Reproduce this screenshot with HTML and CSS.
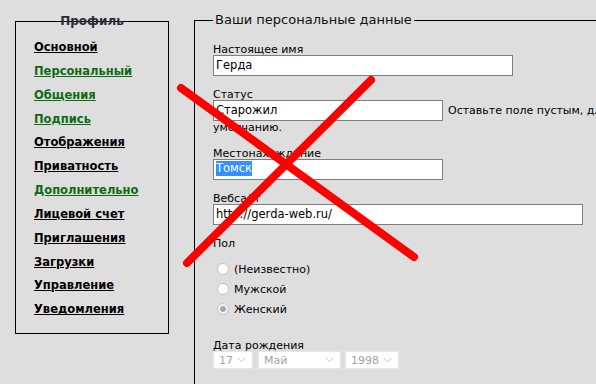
FILE: index.html
```html
<!DOCTYPE html>
<html lang="ru">
<head>
<meta charset="utf-8">
<title>Профиль</title>
<link rel="stylesheet" href="styles.css">
</head>
<body>
<div class="page">
  <nav class="side">
    <div class="side-title">Профиль</div>
    <ul class="menu">
      <li><a href="#">Основной</a></li>
      <li><a class="green" href="#">Персональный</a></li>
      <li><a class="green" href="#">Общения</a></li>
      <li><a class="green" href="#">Подпись</a></li>
      <li><a href="#">Отображения</a></li>
      <li><a href="#">Приватность</a></li>
      <li><a class="green" href="#">Дополнительно</a></li>
      <li><a href="#">Лицевой счет</a></li>
      <li><a href="#">Приглашения</a></li>
      <li><a href="#">Загрузки</a></li>
      <li><a href="#">Управление</a></li>
      <li><a href="#">Уведомления</a></li>
    </ul>
  </nav>

  <form class="main">
    <fieldset class="panel">
      <legend>Ваши персональные данные</legend>

      <div class="label">Настоящее имя</div>
      <div class="box w-name">Герда</div>

      <div class="label gap">Статус</div>
      <div class="status-row">
        <div class="box w-short">Старожил</div>
        <span class="hint">Оставьте поле пустым, для использования значения по</span>
      </div>
      <div class="hint-cont">умолчанию.</div>

      <div class="label gap">Местонахождение</div>
      <div class="box w-short"><span class="sel">Томск</span></div>

      <div class="label gap">Вебсайт</div>
      <div class="box w-web">http://gerda-web.ru/</div>

      <div class="label gap">Пол</div>
      <div class="radios">
        <div class="radio-row"><span class="radio"></span><span>(Неизвестно)</span></div>
        <div class="radio-row"><span class="radio"></span><span>Мужской</span></div>
        <div class="radio-row"><span class="radio checked"></span><span>Женский</span></div>
      </div>

      <div class="label gap-date">Дата рождения</div>
      <div class="selects">
        <div class="select s-day"><span>17</span><svg width="9" height="6" viewBox="0 0 9 6"><path d="M0.5 0.8 L4.5 4.8 L8.5 0.8" fill="none" stroke="#c4c4c4" stroke-width="1"/></svg></div>
        <div class="select s-month"><span>Май</span><svg width="9" height="6" viewBox="0 0 9 6"><path d="M0.5 0.8 L4.5 4.8 L8.5 0.8" fill="none" stroke="#c4c4c4" stroke-width="1"/></svg></div>
        <div class="select s-year"><span>1998</span><svg width="9" height="6" viewBox="0 0 9 6"><path d="M0.5 0.8 L4.5 4.8 L8.5 0.8" fill="none" stroke="#c4c4c4" stroke-width="1"/></svg></div>
      </div>
    </fieldset>
  </form>

  <svg class="cross" width="596" height="384" viewBox="0 0 596 384">
    <line x1="181" y1="88" x2="414" y2="257" stroke="#ff0000" stroke-width="8" stroke-linecap="round"/>
    <line x1="371" y1="80" x2="187" y2="263" stroke="#ff0000" stroke-width="8" stroke-linecap="round"/>
  </svg>
</div>
</body>
</html>
```

FILE: styles.css
```css
html, body {
  margin: 0;
  padding: 0;
  overflow: hidden;
}

body {
  background: #dedede;
  font-family: "DejaVu Sans", Verdana, sans-serif;
  color: #111;
  width: 596px;
  height: 384px;
}

.page {
  position: relative;
  display: flex;
  align-items: flex-start;
  width: 596px;
  height: 384px;
}

/* ---------- left menu ---------- */
.side {
  box-sizing: border-box;
  flex: none;
  width: 154px;
  height: 313px;
  margin: 21px 0 0 15px;
  border: 1px solid #000;
}

.side-title {
  margin-top: -8px;
  text-align: center;
  font-size: 12px;
  font-weight: bold;
  line-height: 14px;
  color: #2b2b33;
}

.menu {
  list-style: none;
  margin: 8px 0 0;
  padding: 0 0 0 18px;
}

.menu li {
  height: 23.85px;
  line-height: 23.85px;
  font-size: 11.5px;
  font-weight: bold;
  white-space: nowrap;
}

.menu a {
  color: #000;
  text-decoration: underline;
}

.menu a.green {
  color: #0e6b12;
}

/* ---------- right form ---------- */
.main {
  flex: none;
  margin: 0;
}

.panel {
  box-sizing: border-box;
  width: 720px;
  height: 420px;
  margin: 12px 0 0 25px;
  padding: 13px 0 0 18px;
  border: 0;
  border-top: 1px solid #000;
  border-left: 1px solid #000;
  min-width: 0;
}

.panel legend {
  padding: 0 2px;
  font-size: 13px;
  line-height: 16px;
  color: #111;
}

.label {
  height: 11px;
  padding-top: 3px;
  font-size: 11px;
  line-height: 11px;
  color: #000;
}

.gap { margin-top: 10px; }
.gap-date { margin-top: 18px; }

.box {
  box-sizing: border-box;
  height: 21px;
  padding: 0 2px;
  border: 1px solid #7e7e7e;
  background: #fff;
  font-size: 11.5px;
  line-height: 19px;
  color: #000;
  white-space: nowrap;
  overflow: hidden;
}

.w-name { width: 300px; }
.w-short { width: 230px; flex: none; }
.w-web { width: 370px; }

.sel {
  display: inline-block;
  background: #3390ff;
  color: #fff;
  line-height: 15px;
  vertical-align: 1px;
}

.status-row {
  display: flex;
  align-items: center;
  gap: 5px;
}

.hint {
  font-size: 11px;
  white-space: nowrap;
  color: #000;
}

.hint-cont {
  font-size: 11px;
  line-height: 14px;
  color: #000;
}

.radios {
  margin-top: 10px;
  display: flex;
  flex-direction: column;
}

.radio-row {
  display: flex;
  align-items: center;
  gap: 5px;
  height: 20px;
  padding-left: 4px;
  font-size: 11px;
  color: #000;
}

.radio {
  box-sizing: border-box;
  width: 12px;
  height: 12px;
  border: 1px solid #c2c2c2;
  border-radius: 50%;
  background: #fff;
}

.radio.checked {
  background: radial-gradient(circle, #a8a8a8 0 2.6px, #f2f2f2 3.2px);
  border-color: #c8c8c8;
}

.selects {
  display: flex;
  gap: 5px;
}

.select {
  box-sizing: border-box;
  display: flex;
  align-items: center;
  justify-content: space-between;
  height: 18px;
  padding: 0 6px 0 5px;
  border: 1px solid #e6e6e6;
  background: #fff;
  font-size: 11px;
  color: #a3a3a3;
}

.s-day { width: 40px; }
.s-month { width: 83px; }
.s-year { width: 54px; margin-left: -1px; }

.cross {
  position: absolute;
  left: 0;
  top: 0;
  pointer-events: none;
}
```
